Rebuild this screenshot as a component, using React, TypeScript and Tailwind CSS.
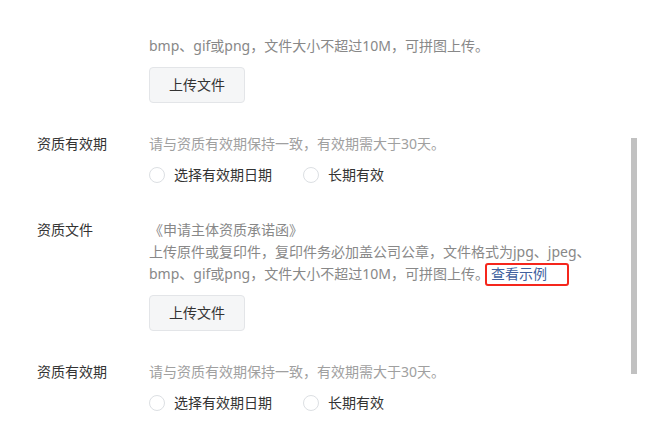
export default function App() {
  return (
    <div className="relative w-[655px] h-[437px] overflow-hidden bg-white font-['Noto_Sans','Noto_Sans_CJK_SC',sans-serif] text-[14px] leading-[22px] text-[#333]">
      {/* tail of previous block, scrolled */}
      <div className="pl-[149px] pt-[35px]">
        <p className="text-[#888]">bmp、gif或png，文件大小不超过10M，可拼图上传。</p>
        <UploadButton />
      </div>

      <ValidityRow />

      <div className="mt-[32px] flex">
        <div className="w-[149px] shrink-0 pl-[37px]">资质文件</div>
        <div className="text-[#888]">
          <p>《申请主体资质承诺函》</p>
          <p>上传原件或复印件，复印件务必加盖公司公章，文件格式为jpg、jpeg、</p>
          <p>
            bmp、gif或png，文件大小不超过10M，可拼图上传。
            <span className="relative ml-[2px] text-[#40609e]">
              查看示例
              <span className="absolute -left-[6px] -top-[1px] w-[84px] h-[23px] rounded-[3px] border-2 border-[#f5261c]" />
            </span>
          </p>
          <UploadButton />
        </div>
      </div>

      <ValidityRow />

      {/* scrollbar thumb */}
      <div className="absolute left-[631px] top-[138px] w-[6px] h-[236px] bg-[#c1c1c1]" />
    </div>
  );
}

function UploadButton() {
  return (
    <button className="mt-[10px] flex w-[96px] h-[36px] items-center justify-center rounded-[4px] border border-[#e3e5e8] bg-[#f5f6f7] text-[14px] text-[#333]">
      上传文件
    </button>
  );
}

function ValidityRow() {
  return (
    <div className="mt-[30px] flex">
      <div className="w-[149px] shrink-0 pl-[37px]">资质有效期</div>
      <div>
        <p className="text-[#a0a0a0]">请与资质有效期保持一致，有效期需大于30天。</p>
        <div className="mt-2 flex h-6 items-center">
          <Radio label="选择有效期日期" />
          <div className="w-[31px]" />
          <Radio label="长期有效" />
        </div>
      </div>
    </div>
  );
}

function Radio({ label }: { label: string }) {
  return (
    <label className="flex items-center gap-[9px]">
      <span className="w-[16px] h-[16px] rounded-full border border-[#dcdfe3] bg-white" />
      <span>{label}</span>
    </label>
  );
}
